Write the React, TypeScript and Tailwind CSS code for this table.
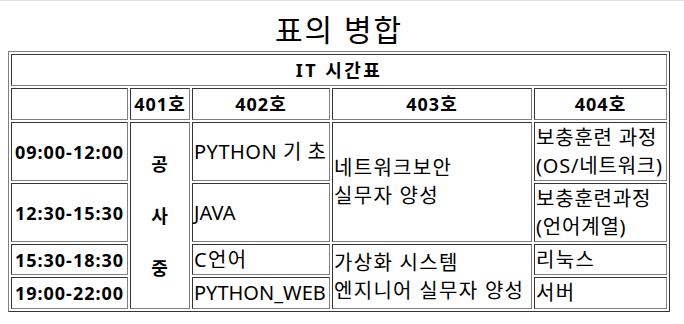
const cell =
	"border border-t-[#363636] border-l-[#363636] border-r-[#808080] border-b-[#808080] px-px py-0";
const head = `${cell} text-center font-bold text-[18px] tracking-[1px] leading-[26px]`;
const body = `${cell} text-left font-normal text-[20px] leading-[28px] whitespace-nowrap`;
// hangul cells get a little extra spacing, the latin ones are wide enough
const wide = `${body} tracking-[1.3px]`;
const narrow = `${body} tracking-[0.8px]`;

export default function App() {
	return (
		<div className="w-[684px] h-[324px] bg-white text-black font-['Noto_Sans','Noto_Sans_CJK_KR',sans-serif]">
			<div className="h-px bg-[#dfe0e3]" />

			<table className="ml-2 mt-[7px] w-[662px] table-fixed border-separate border-spacing-[2px] border border-t-[#808080] border-l-[#808080] border-r-[#363636] border-b-[#363636]">
				<caption className="text-[30px] leading-[43px] font-normal tracking-[2px]">
					표의 병합
				</caption>

				<colgroup>
					<col className="w-[117px]" />
					<col className="w-[60px]" />
					<col className="w-[138px]" />
					<col className="w-[200px]" />
					<col className="w-[133px]" />
				</colgroup>

				<tbody>
					<tr className="h-[32px]">
						<th colSpan={5} className={`${head} tracking-[2.5px]`}>
							IT 시간표
						</th>
					</tr>

					<tr className="h-[32px]">
						<th className={head}></th>
						{["401호", "402호", "403호", "404호"].map((room) => (
							<th key={room} className={head}>
								{room}
							</th>
						))}
					</tr>

					<tr className="h-[59px]">
						<th className={head}>09:00-12:00</th>
						<th rowSpan={4} className={head}>
							<div className="flex flex-col items-center">
								<span>공</span>
								<span className="h-[26px]" />
								<span>사</span>
								<span className="h-[26px]" />
								<span>중</span>
							</div>
						</th>
						<td className={`${body} tracking-[0.5px]`}>PYTHON 기 초</td>
						<td rowSpan={2} className={wide}>
							네트워크보안
							<br />
							실무자 양성
						</td>
						<td className={narrow}>
							보충훈련 과정
							<br />
							(OS/네트워크)
						</td>
					</tr>

					<tr className="h-[59px]">
						<th className={head}>12:30-15:30</th>
						<td className={body}>JAVA</td>
						<td className={narrow}>
							보충훈련과정
							<br />
							(언어계열)
						</td>
					</tr>

					<tr className="h-[31px]">
						<th className={head}>15:30-18:30</th>
						<td className={wide}>C언어</td>
						<td rowSpan={2} className={wide}>
							가상화 시스템
							<br />
							엔지니어 실무자 양성
						</td>
						<td className={wide}>리눅스</td>
					</tr>

					<tr className="h-[32px]">
						<th className={head}>19:00-22:00</th>
						<td className={body}>PYTHON_WEB</td>
						<td className={wide}>서버</td>
					</tr>
				</tbody>
			</table>
		</div>
	);
}
